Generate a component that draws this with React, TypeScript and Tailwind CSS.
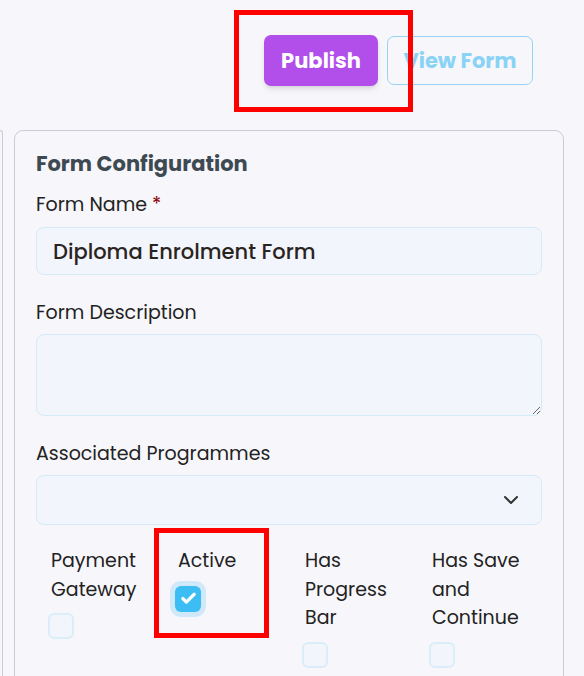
import React, { useState } from 'react';
import { ChevronDown, Check } from 'lucide-react';

const fontStack = "font-['Poppins','DejaVu_Sans',sans-serif]";

const Toggle = ({ label, checked, onChange }: { label: string[]; checked: boolean; onChange: () => void }) => (
    <div className="flex flex-col items-start">
        <div className="pl-[3px] text-[19px] leading-[28.5px] text-[#222222]">
            {label.map((line) => (
                <div key={line}>{line}</div>
            ))}
        </div>
        {checked ? (
            <button
                onClick={onChange}
                className="mt-[10px] flex h-[26px] w-[26px] items-center justify-center rounded-[6px] bg-[#3cbdf4] ring-[5px] ring-[#d0e9fa]"
            >
                <Check size={17} strokeWidth={4.5} className="text-white" />
            </button>
        ) : (
            <button onClick={onChange} className="mt-[9px] h-[26px] w-[26px] rounded-[6px] border-2 border-[#dbedf9] bg-[#f2f5fb]" />
        )}
    </div>
);

const App = () => {
    const [formName, setFormName] = useState('Diploma Enrolment Form');
    const [description, setDescription] = useState('');
    const [flags, setFlags] = useState({ payment: false, active: true, progress: false, save: false });

    const toggle = (key: keyof typeof flags) => setFlags({ ...flags, [key]: !flags[key] });

    return (
        <div className={`relative h-[676px] w-[584px] overflow-hidden bg-[#f7f6fb] ${fontStack}`}>
            {/* Header actions */}
            <div className="flex justify-end gap-[9px] pr-[51px] pt-[35px]">
                <button className="h-[51px] w-[114px] rounded-[7px] bg-[#b24fea] text-[21px] font-bold text-white shadow-md">Publish</button>
                <button className="mt-[1px] h-[49px] w-[146px] rounded-[7px] border border-[#93d5f3] text-[21px] font-bold text-[#8ad3f5]">View Form</button>
            </div>

            {/* Panels */}
            <div className="mt-[44px] flex">
                <div className="h-[600px] w-[3px] rounded-tr-lg border-r border-t border-[#cdccd4]" />
                <div className="ml-[11px] w-[550px] rounded-[9px] border border-[#cdccd4] px-[21px] pb-10 pt-[19px]">
                    <h2 className="text-[21px] font-bold leading-[28px] text-[#3e4a52]">Form Configuration</h2>

                    <label className="mt-[13px] block text-[19px] leading-[28px] text-[#222222]">
                        Form Name <span className="text-[#8b0000]">*</span>
                    </label>
                    <input
                        type="text"
                        value={formName}
                        onChange={(e) => setFormName(e.target.value)}
                        className="mt-[8px] h-[48px] w-full rounded-[8px] border border-[#d5eaf7] bg-[#f2f5fb] px-[16px] text-[21px] font-medium text-[#2a241f] outline-none"
                    />

                    <label className="mt-[24px] block text-[19px] leading-[28px] text-[#222222]">Form Description</label>
                    <textarea
                        value={description}
                        onChange={(e) => setDescription(e.target.value)}
                        className="mt-[7px] block h-[82px] w-full rounded-[8px] border border-[#d5eaf7] bg-[#f2f5fb] px-[16px] py-2 text-[18px] outline-none"
                    />

                    <label className="mt-[24px] block text-[19px] leading-[28px] text-[#222222]">Associated Programmes</label>
                    <div className="mt-[7px] flex h-[50px] w-full items-center justify-end rounded-[8px] border border-[#d5eaf7] bg-[#f2f5fb] pr-[18px]">
                        <ChevronDown size={24} strokeWidth={2} className="text-[#333333]" />
                    </div>

                    {/* Toggles */}
                    <div className="ml-[12px] mt-[22px] grid grid-cols-[repeat(4,127px)]">
                        <Toggle label={['Payment', 'Gateway']} checked={flags.payment} onChange={() => toggle('payment')} />
                        <Toggle label={['Active']} checked={flags.active} onChange={() => toggle('active')} />
                        <Toggle label={['Has', 'Progress', 'Bar']} checked={flags.progress} onChange={() => toggle('progress')} />
                        <Toggle label={['Has Save', 'and', 'Continue']} checked={flags.save} onChange={() => toggle('save')} />
                    </div>
                </div>
            </div>

            {/* Annotation boxes */}
            <div className="pointer-events-none absolute left-[234px] top-[10px] h-[102px] w-[179px] border-[5px] border-[#ff0000]" />
            <div className="pointer-events-none absolute left-[154px] top-[528px] h-[110px] w-[115px] border-[5px] border-[#ff0000]" />
        </div>
    );
};

export default App;
